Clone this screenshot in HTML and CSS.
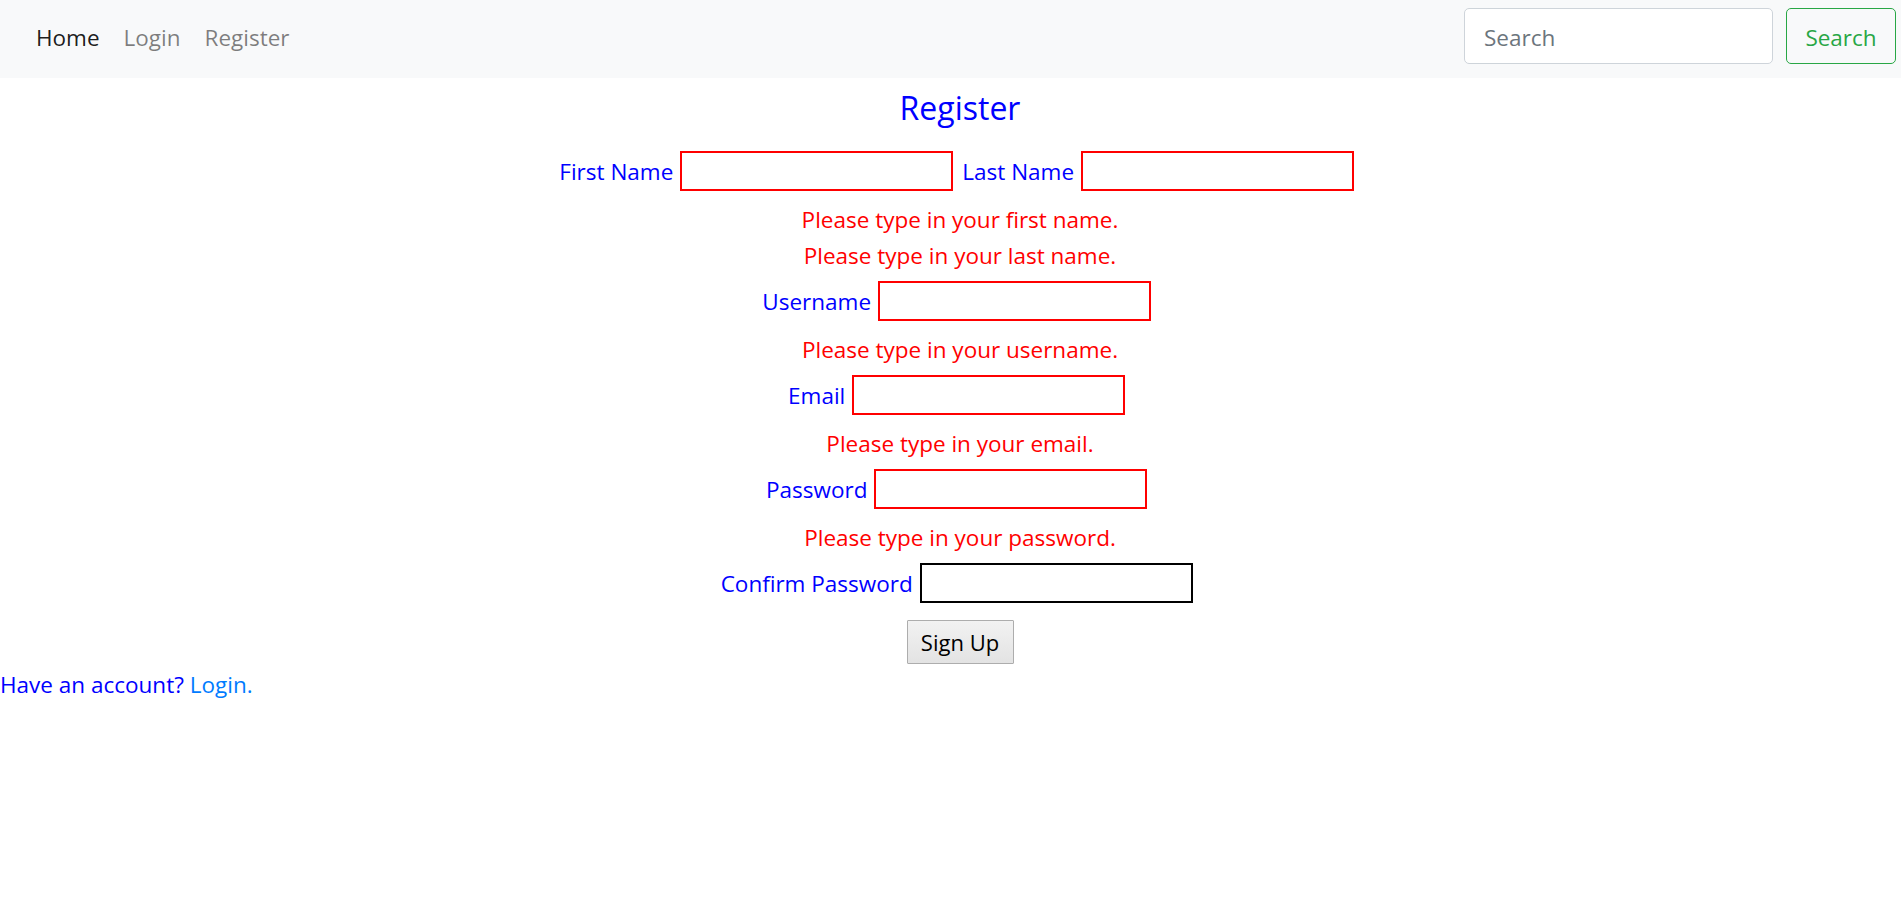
FILE: index.html
```html
<!DOCTYPE html>
<html lang="en">
<head>
<meta charset="utf-8">
<title>Register</title>
<link rel="stylesheet" href="styles.css">
</head>
<body>
<nav class="navbar">
  <ul class="nav">
    <li><a class="nav-link active" href="#">Home</a></li>
    <li><a class="nav-link" href="#">Login</a></li>
    <li><a class="nav-link" href="#">Register</a></li>
  </ul>
  <form class="search">
    <input class="search-input" type="search" placeholder="Search">
    <button class="search-btn" type="button">Search</button>
  </form>
</nav>
<main class="page">
  <form class="register">
    <h2 class="title">Register</h2>
    <div class="row">
      <label class="label">First Name</label>
      <input class="field invalid" type="text">
      <label class="label label-next">Last Name</label>
      <input class="field invalid" type="text">
    </div>
    <div class="error">Please type in your first name.</div>
    <div class="error">Please type in your last name.</div>
    <div class="row">
      <label class="label">Username</label>
      <input class="field invalid" type="text">
    </div>
    <div class="error">Please type in your username.</div>
    <div class="row">
      <label class="label">Email</label>
      <input class="field invalid" type="text">
    </div>
    <div class="error">Please type in your email.</div>
    <div class="row">
      <label class="label">Password</label>
      <input class="field invalid" type="password">
    </div>
    <div class="error">Please type in your password.</div>
    <div class="row">
      <label class="label">Confirm Password</label>
      <input class="field plain" type="password">
    </div>
    <div class="actions">
      <button class="submit" type="button">Sign Up</button>
    </div>
  </form>
  <p class="account">Have an account? <a class="account-link" href="#">Login.</a></p>
</main>
</body>
</html>
```
FILE: styles.css
```css
* { box-sizing: border-box; }

html, body {
  margin: 0;
  padding: 0;
  background: #ffffff;
}

body {
  font-family: "Open Sans", "Noto Sans", sans-serif;
  font-size: 22.5px;
  line-height: 36px;
  color: #212529;
}

/* ---------- navbar ---------- */
.navbar {
  height: 78px;
  background: #f8f9fa;
  display: flex;
  align-items: center;
  justify-content: space-between;
  padding: 8px 5px 14px 24px;
}

.nav {
  list-style: none;
  margin: 0;
  padding: 0;
  display: flex;
}

.nav-link {
  display: block;
  padding: 3px 12px 0;
  color: rgba(0, 0, 0, 0.5);
  text-decoration: none;
  font-size: 22.5px;
  line-height: 36px;
}

.nav-link.active {
  color: rgba(0, 0, 0, 0.9);
}

.search {
  display: flex;
  gap: 13px;
}

.search-input {
  width: 309px;
  height: 56px;
  padding: 2px 19px 0;
  border: 1px solid #ced4da;
  border-radius: 5px;
  background: #fff;
  font-family: inherit;
  font-size: 22.5px;
  color: #495057;
  outline: none;
}

.search-input::placeholder {
  color: #6c757d;
}

.search-btn {
  width: 110px;
  height: 56px;
  padding: 2px 0 0;
  border: 1.5px solid #28a745;
  border-radius: 5px;
  background: transparent;
  color: #28a745;
  font-family: inherit;
  font-size: 22.5px;
}

/* ---------- register form ---------- */
.register {
  margin: 0;
  padding-left: 19px;
  display: flex;
  flex-direction: column;
  align-items: center;
}

.title {
  margin: 9px 0 15px;
  font-size: 32px;
  font-weight: 400;
  line-height: 41px;
  color: #0000ff;
}

.row {
  display: flex;
  align-items: center;
  justify-content: center;
  padding: 8px 6.6px 10px 0;
}

.row:first-of-type {
  padding-top: 7.5px;
}

.label {
  color: #0000ff;
  margin-right: 7px;
  padding-top: 3px;
}

.label-next {
  margin-left: 9px;
}

.field {
  width: 273px;
  height: 40px;
  padding: 0 4px;
  border: 2px solid #ff0000;
  background: #fff;
  font-family: inherit;
  font-size: 20px;
  outline: none;
}

.field.plain {
  border-color: #000000;
}

.error {
  height: 36px;
  padding-top: 1.5px;
  color: #ff0000;
  text-align: center;
}

.actions {
  padding-top: 7px;
}

.submit {
  width: 107px;
  height: 44px;
  padding: 1px 0 0;
  border: 1px solid #adadad;
  border-radius: 1px;
  background: linear-gradient(#f2f2f2, #e3e3e3);
  color: #000;
  font-family: inherit;
  font-size: 22px;
}

.account {
  margin: 0;
  padding-top: 3.5px;
  color: #0000ff;
}

.account-link {
  color: #007bff;
  text-decoration: none;
}
```
